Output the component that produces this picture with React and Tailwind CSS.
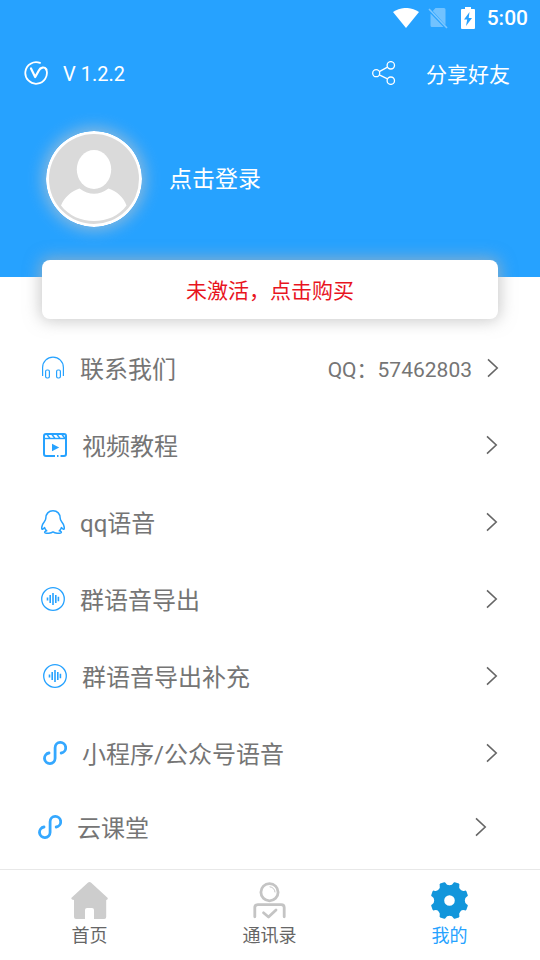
import { useState } from 'react';

function VersionIcon() {
  return (
    <svg className="size-6" viewBox="0 0 24 24" fill="none" stroke="white" strokeWidth="1.8" strokeLinecap="round" strokeLinejoin="round">
      <path d="M16 1.9A10.8 10.8 0 1 0 22.3 8.4" />
      <path d="M7 7.5L11.2 16L15 9.2C16.4 6.2 20.5 5.4 22.3 8.4" strokeWidth="2.2" />
    </svg>
  );
}

function ShareIcon() {
  return (
    <svg className="size-6" viewBox="0 0 24 24" fill="none" stroke="white" strokeWidth="1.3">
      <circle cx="4.2" cy="12.2" r="3.5" />
      <circle cx="18.8" cy="4.3" r="3.7" />
      <circle cx="18.8" cy="19.7" r="3.7" />
      <path d="M7.3 10.6L15.5 6.1M7.3 13.9L15.5 17.9" />
    </svg>
  );
}

function StatusBar() {
  return (
    <div className="flex h-9 items-center justify-end pr-3 text-white">
      <svg className="h-5 w-[26px]" viewBox="0 0 26 20" fill="white">
        <path d="M0 4C7.6 -1.4 18.4 -1.4 26 4L13 20Z" />
      </svg>
      <svg className="ml-[9px] h-[22px] w-5" viewBox="0 0 20 22">
        <path d="M7.5 1H16Q17.5 1 17.5 2.5V18L4.8 4ZM2.5 6.5L15.5 20H4Q2.5 20 2.5 18.5Z" fill="white" opacity=".35" />
        <path d="M1 2L19 21" stroke="white" strokeWidth="1.6" opacity=".4" />
      </svg>
      <svg className="ml-3 h-[22px] w-4" viewBox="0 0 16 22">
        <path d="M5 0H11V2H14Q15 2 15 3V21Q15 22 14 22H2Q1 22 1 21V3Q1 2 2 2H5Z" fill="white" />
        <path d="M9.5 5L4 12.5H7.2L6 19L12 11H8.7Z" fill="#26a2ff" />
      </svg>
      <span className="ml-[11px] text-[21px] leading-6 font-medium">5:00</span>
    </div>
  );
}

function Avatar() {
  return (
    <svg className="size-24 rounded-full shadow-[0_0_16px_3px_rgba(200,200,200,0.65)]" viewBox="0 0 96 96">
      <circle cx="48" cy="48" r="48" fill="white" />
      <circle cx="48" cy="48" r="45" fill="#dadada" />
      <ellipse cx="48" cy="38.5" rx="17.2" ry="19.6" fill="white" />
      <path d="M33.5 57.5Q48 68 62.5 57.5C71 60 78 67 80.5 74.5C73 85 61 90 48 90C35 90 23 85 15 74.5C18 67 25 60 33.5 57.5Z" fill="white" />
    </svg>
  );
}

function HeadsetIcon() {
  return (
    <svg className="size-6" viewBox="0 0 24 24" fill="none" stroke="#26a2ff" strokeWidth="1.2">
      <path d="M1.6 20V11.5A10.4 10.4 0 0 1 22.4 11.5V20" />
      <rect x="4.6" y="14" width="3.8" height="8" rx="1.4" />
      <rect x="15.6" y="14" width="3.8" height="8" rx="1.4" />
    </svg>
  );
}

function VideoIcon() {
  return (
    <svg className="size-6" viewBox="0 0 24 24" fill="none" stroke="#26a2ff" strokeWidth="2">
      <path d="M12 23H3Q1 23 1 21V3Q1 1 3 1H21Q23 1 23 3V21Q23 23 21 23H17.5" />
      <path d="M1 5.5H23" strokeWidth="1.4" />
      <path d="M4 1.5L7 5.5M9 1.5L12 5.5M14 1.5L17 5.5M19 1.5L22 5.5" strokeWidth="1.4" />
      <path d="M9 10.8L16.2 14.5L9 18.2Z" fill="#26a2ff" stroke="none" />
      <path d="M14 23H15.5" />
    </svg>
  );
}

function PenguinIcon() {
  return (
    <svg className="size-6" viewBox="0 0 24 24" fill="none" stroke="#26a2ff" strokeWidth="1.5" strokeLinejoin="round">
      <path d="M12 .8C7.6 .8 4.8 3.8 4.8 8.3C4.8 9.6 4.2 10.6 3.3 11.8C1.5 14 .4 16.4 .8 18.8C1.2 20 2.4 18.9 3.6 17.6C4 19 4.7 20 5.7 20.8C3.9 21.3 3.3 22.2 4 22.8C5.6 23.7 10 23.4 12 21.9C14 23.4 18.4 23.7 20 22.8C20.7 22.2 20.1 21.3 18.3 20.8C19.3 20 20 19 20.4 17.6C21.6 18.9 22.8 20 23.2 18.8C23.6 16.4 22.5 14 20.7 11.8C19.8 10.6 19.2 9.6 19.2 8.3C19.2 3.8 16.4 .8 12 .8Z" />
    </svg>
  );
}

function VoiceIcon() {
  return (
    <svg className="size-6" viewBox="0 0 24 24" fill="none" stroke="#26a2ff" strokeWidth="1.3">
      <circle cx="12" cy="12" r="11.3" />
      <path d="M6.5 10.5V13.5M9.2 8V16M12 6V18M14.8 8V16M17.4 9.8V14.2" strokeWidth="1.6" />
    </svg>
  );
}

function MiniProgramIcon() {
  return (
    <svg className="size-6" viewBox="0 0 24 24" fill="none" stroke="#35a8ff" strokeWidth="2.8" strokeLinecap="round">
      <path d="M6 12A5.3 5.3 0 1 0 12.1 17.3V6.7A5.3 5.3 0 1 1 18.2 12" />
    </svg>
  );
}

function Chevron() {
  return (
    <svg className="h-5 w-3 shrink-0" viewBox="0 0 12 20" fill="none" stroke="#666" strokeWidth="1.6">
      <path d="M1 1.4L10.2 10L1 18.6" />
    </svg>
  );
}

function HomeIcon() {
  return (
    <svg className="size-[37px]" viewBox="0 0 37 37" fill="#cdcdcd">
      <path d="M16.8.7Q18.5-.5 20.2.7L36.5 15.8Q37.4 17.5 35.2 18V35Q35.2 37 33.2 37H23V28Q23 26 21 26H16Q14 26 14 28V37H5Q3 37 3 35V18Q-.4 17.6.5 15.8Z" />
    </svg>
  );
}

function ContactsIcon() {
  return (
    <svg className="size-[37px]" viewBox="0 0 37 37" fill="none" stroke="#c4c4c4" strokeWidth="2.8" strokeLinecap="round" strokeLinejoin="round">
      <circle cx="18.5" cy="10.2" r="8.6" />
      <path d="M19 4.8Q23.5 5.5 24 10" strokeWidth="1" />
      <path d="M3.8 34.8V25.5Q3.8 22.6 6.8 22.6H30.2Q33.2 22.6 33.2 25.5V34.8" />
      <path d="M12.5 30.8L17.5 35L25 28" />
    </svg>
  );
}

function GearIcon() {
  return (
    <svg className="size-[37px]" viewBox="0 0 37 37" fill="#1296db">
      <path
        fillRule="evenodd"
        d="M9.2 1.6L13.2.2Q14.2 0 14.6 1Q15.5 3.2 18.5 3.2Q21.5 3.2 22.4 1Q22.8 0 23.8.2L27.8 1.6Q28.8 2.2 28.3 3.2Q27.6 6 29.4 7.6Q31 9.4 33.8 8.7Q34.8 8.2 35.4 9.2L36.8 13.2Q37 14.2 36 14.6Q33.8 15.5 33.8 18.5Q33.8 21.5 36 22.4Q37 22.8 36.8 23.8L35.4 27.8Q34.8 28.8 33.8 28.3Q31 27.6 29.4 29.4Q27.6 31 28.3 33.8Q28.8 34.8 27.8 35.4L23.8 36.8Q22.8 37 22.4 36Q21.5 33.8 18.5 33.8Q15.5 33.8 14.6 36Q14.2 37 13.2 36.8L9.2 35.4Q8.2 34.8 8.7 33.8Q9.4 31 7.6 29.4Q6 27.6 3.2 28.3Q2.2 28.8 1.6 27.8L.2 23.8Q0 22.8 1 22.4Q3.2 21.5 3.2 18.5Q3.2 15.5 1 14.6Q0 14.2.2 13.2L1.6 9.2Q2.2 8.2 3.2 8.7Q6 9.4 7.6 7.6Q9.4 6 8.7 3.2Q8.2 2.2 9.2 1.6ZM18.5 13.2A5.3 5.3 0 1 0 18.5 23.8A5.3 5.3 0 1 0 18.5 13.2Z"
      />
    </svg>
  );
}

const menuItems = [
  { label: '联系我们', Icon: HeadsetIcon, extra: 'QQ：57462803', style: 'h-[77px] pl-[41px] pr-[41px]' },
  { label: '视频教程', Icon: VideoIcon, style: 'h-[77px] pl-[43px] pr-[42px]' },
  { label: 'qq语音', Icon: PenguinIcon, style: 'h-[77px] pl-[41px] pr-[42px]' },
  { label: '群语音导出', Icon: VoiceIcon, style: 'h-[77px] pl-[41px] pr-[42px]' },
  { label: '群语音导出补充', Icon: VoiceIcon, style: 'h-[77px] pl-[43px] pr-[42px]' },
  { label: '小程序/公众号语音', Icon: MiniProgramIcon, style: 'h-[77px] pl-[43px] pr-[42px]' },
  { label: '云课堂', Icon: MiniProgramIcon, style: 'h-[72px] pl-[38px] pr-[53px]' },
];

const tabs = [
  { id: 'home', label: '首页', Icon: HomeIcon },
  { id: 'contacts', label: '通讯录', Icon: ContactsIcon },
  { id: 'mine', label: '我的', Icon: GearIcon },
];

function App() {
  const [activeTab, setActiveTab] = useState('mine');

  return (
    <div className="flex min-h-screen flex-col bg-white font-[Roboto,'Noto_Sans_CJK_SC',sans-serif]">
      <header className="bg-[#26a2ff] pb-[50px] text-white">
        <StatusBar />
        <div className="flex h-[74px] items-center justify-between pr-[30px] pl-6">
          <div className="flex items-center gap-[15px]">
            <VersionIcon />
            <span className="pt-[2px] text-[20px] leading-6">V 1.2.2</span>
          </div>
          <button className="flex items-center gap-[30px] text-[21px] leading-6">
            <ShareIcon />
            <span className="pt-1">分享好友</span>
          </button>
        </div>
        <button className="mt-[21px] ml-[46px] flex items-center gap-[27px] text-[23px] leading-8">
          <Avatar />
          <span className="pt-[2px]">点击登录</span>
        </button>
      </header>

      <main>
        <div className="-mt-[17px] px-[42px]">
          <button className="block h-[59px] w-full rounded-lg bg-white pt-1 text-[21px] text-[#e8141e] shadow-[0_0_16px_2px_rgba(180,180,180,0.7)]">
            未激活，点击购买
          </button>
        </div>
        <ul className="mt-[10px]">
          {menuItems.map(({ label, Icon, extra, style }) => (
            <li key={label}>
              <button className={`flex w-full items-center text-[24px] leading-8 text-[#757575] ${style}`}>
                <Icon />
                <span className="ml-[15px] flex-1 pt-1 text-left">{label}</span>
                {extra && <span className="mr-[15px] pt-1 text-[21px]">{extra}</span>}
                <Chevron />
              </button>
            </li>
          ))}
        </ul>
      </main>

      <nav className="mt-auto grid h-[91px] grid-cols-3 border-t border-[#e8e8e8]">
        {tabs.map(({ id, label, Icon }) => (
          <button
            key={id}
            onClick={() => setActiveTab(id)}
            className={`flex flex-col items-center gap-[5px] pt-3 pr-px text-[18px] leading-6 ${activeTab === id ? 'text-[#26a2ff]' : 'text-[#666]'}`}
          >
            <Icon />
            {label}
          </button>
        ))}
      </nav>
    </div>
  );
}

export default App;
